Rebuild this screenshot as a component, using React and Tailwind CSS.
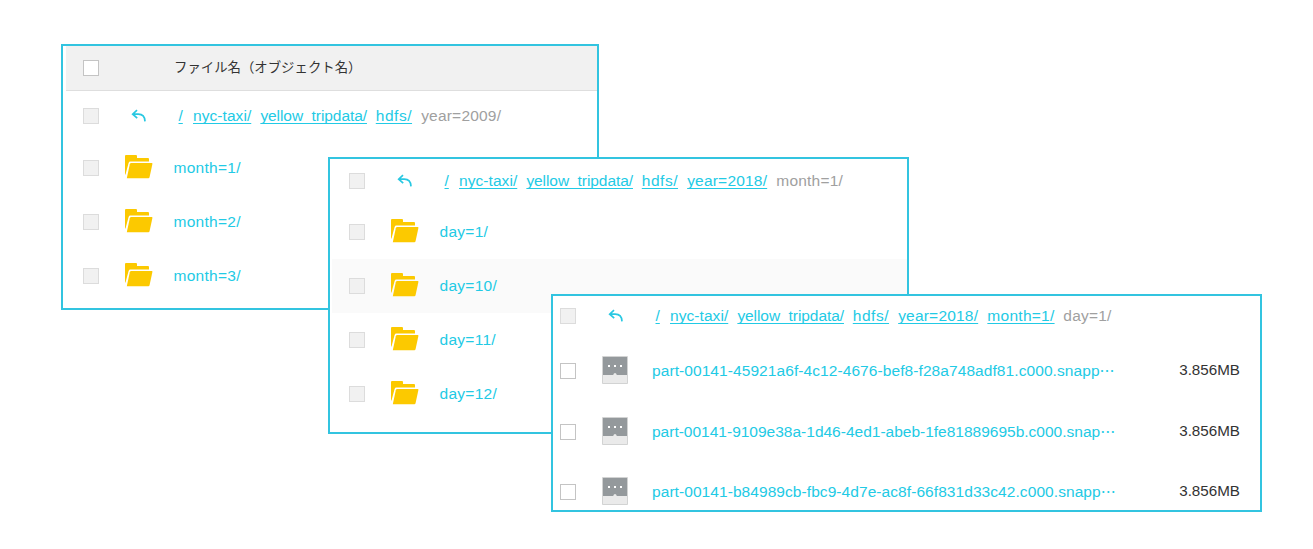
import React from "react";

const NYC = { text: "nyc-taxi/", cls: "tracking-[0.06px] w-[58.4px]" };
const YELLOW = { text: "yellow_tripdata/", cls: "tracking-[-0.07px] w-[106.4px]" };
const HDFS = { text: "hdfs/", cls: "tracking-[0.53px] w-[36.4px]" };
const YEAR = { text: "year=2018/", cls: "tracking-[0.2px] w-[80.2px]" };
const MONTH = { text: "month=1/", cls: "tracking-[0.27px] w-[67px]" };

function Checkbox({ disabled }) {
  return (
    <span
      className={
        disabled
          ? "block size-4 shrink-0 border-[1.5px] border-[#dcdcdc] bg-[#f1f1f1]"
          : "block size-4 shrink-0 border-[1.5px] border-[#c4c4c4] bg-white"
      }
    />
  );
}

function BackArrow() {
  return (
    <svg width="16" height="14" viewBox="0 0 16 14" fill="none" stroke="#29c8e2" strokeWidth="1.7">
      <path d="M6 1.2 1.7 5.2 6.2 9.2M2 5.2H7.3C11.3 5.2 13.8 8 14 12.4" />
    </svg>
  );
}

function FolderIcon() {
  return (
    <svg width="28" height="24" viewBox="0 0 28 24" fill="#fcc900">
      <path d="M0 1Q0 0 1 0H11Q12 0 12 1V3H23Q24 3 24 4V6.6H5.4Q4 6.6 3.6 8L0.5 19.5H0Z" />
      <path d="M6.2 8H26.8Q27.6 8 27.4 9L24.6 22Q24.3 23.3 23.4 23.3H1.8L4.8 9.2Q5.1 8 6.2 8Z" />
    </svg>
  );
}

function FileIcon() {
  return (
    <svg width="26" height="28" viewBox="0 0 26 28">
      <path d="M0.5 .5H25.5V27.5H.5Z" fill="#eaeaea" stroke="#d2d3d3" />
      <path d="M1 1H25V19H14.8Q14.3 17 13 17T11.2 19H1Z" fill="#94999c" />
      <g fill="#fff">
        <rect x="6" y="9" width="2" height="2" />
        <rect x="12" y="9" width="2" height="2" />
        <rect x="18" y="9" width="2" height="2" />
      </g>
    </svg>
  );
}

function Row({ className, disabled = true, icon, children }) {
  return (
    <div className={`flex shrink-0 items-center ${className}`}>
      <Checkbox disabled={disabled} />
      <div className="ml-[26px] flex w-[50px] shrink-0 items-center">{icon}</div>
      {children}
    </div>
  );
}

function Breadcrumb({ className, links, current }) {
  return (
    <Row className={className} icon={<div className="ml-[6px]"><BackArrow /></div>}>
      <div className="ml-[2.5px] -mt-px flex gap-[9px] text-[15.5px] leading-5 whitespace-nowrap">
        <a className="w-[6.5px] pl-px underline underline-offset-2">/</a>
        {links.map((l) => (
          <a key={l.text} className={`underline underline-offset-2 [text-decoration-skip-ink:none] ${l.cls}`}>
            {l.text}
          </a>
        ))}
        <span className="tracking-[0.2px] text-[#a0a0a0]">{current}</span>
      </div>
    </Row>
  );
}

function FolderRow({ className, name }) {
  return (
    <Row className={`h-[54px] ${className}`} icon={<div className="-mt-[3px]"><FolderIcon /></div>}>
      <span className="-ml-[1.5px] text-[15.5px] leading-5 tracking-[0.28px]">{name}</span>
    </Row>
  );
}

const FILES = [
  { name: "part-00141-45921a6f-4c12-4676-bef8-f28a748adf81.c000.snapp", cls: "tracking-[0.08px]" },
  { name: "part-00141-9109e38a-1d46-4ed1-abeb-1fe81889695b.c000.snap", cls: "tracking-[0px]" },
  { name: "part-00141-b84989cb-fbc9-4d7e-ac8f-66f831d33c42.c000.snapp", cls: "tracking-[0.07px]" },
];

export default function App() {
  return (
    <main
      lang="ja"
      className="relative h-[549px] w-[1313px] overflow-hidden bg-white font-['Liberation_Sans','Noto_Sans_CJK_JP',sans-serif] text-[#22cae5]"
    >
      <section className="absolute top-[44px] left-[61px] flex h-[266px] w-[538px] flex-col overflow-hidden border-2 border-[#32c4e0] bg-white">
        <div className="ml-[3px] flex h-[45px] shrink-0 items-center border-b border-[#dedede] bg-[#f1f1f1] pl-[17px]">
          <Checkbox />
          <span className="ml-[75px] -mt-[5px] text-[13.4px] leading-5 whitespace-nowrap text-[#333] [font-kerning:none] font-['Noto_Sans_CJK_JP',sans-serif]">
            ファイル名（オブジェクト名）
          </span>
        </div>
        <Breadcrumb className="h-[50px] pl-[20px]" links={[NYC, YELLOW, HDFS]} current="year=2009/" />
        <FolderRow className="pl-[20px]" name="month=1/" />
        <FolderRow className="pl-[20px]" name="month=2/" />
        <FolderRow className="pl-[20px]" name="month=3/" />
      </section>

      <section className="absolute top-[157px] left-[328px] flex h-[277px] w-[581px] flex-col overflow-hidden border-2 border-[#32c4e0] bg-white">
        <Breadcrumb className="h-[46px] pl-[19px] pb-[2px]" links={[NYC, YELLOW, HDFS, YEAR]} current="month=1/" />
        <FolderRow className="pl-[19px]" name="day=1/" />
        <FolderRow className="ml-[2px] bg-[#fafafa] pl-[17px]" name="day=10/" />
        <FolderRow className="pl-[19px]" name="day=11/" />
        <FolderRow className="pl-[19px]" name="day=12/" />
      </section>

      <section className="absolute top-[294px] left-[551px] flex h-[218px] w-[711px] flex-col overflow-hidden border-2 border-[#32c4e0] bg-white">
        <Breadcrumb className="h-[45px] pl-[7px] pb-[5px]" links={[NYC, YELLOW, HDFS, YEAR, MONTH]} current="day=1/" />
        {FILES.map((f) => (
          <Row
            key={f.name}
            disabled={false}
            className="h-[60.6px] pr-[20px] pl-[7px]"
            icon={<div className="-mt-[2px]"><FileIcon /></div>}
          >
            <span className="flex text-[15.5px] leading-5 whitespace-nowrap">
              <span className={f.cls}>{f.name}</span>
              <span className="w-[15px] text-[15px] font-['Noto_Sans_CJK_JP',sans-serif]">⋯</span>
            </span>
            <span className="-mt-[2px] ml-auto text-[15.2px] leading-5 text-[#333]">3.856MB</span>
          </Row>
        ))}
      </section>
    </main>
  );
}
